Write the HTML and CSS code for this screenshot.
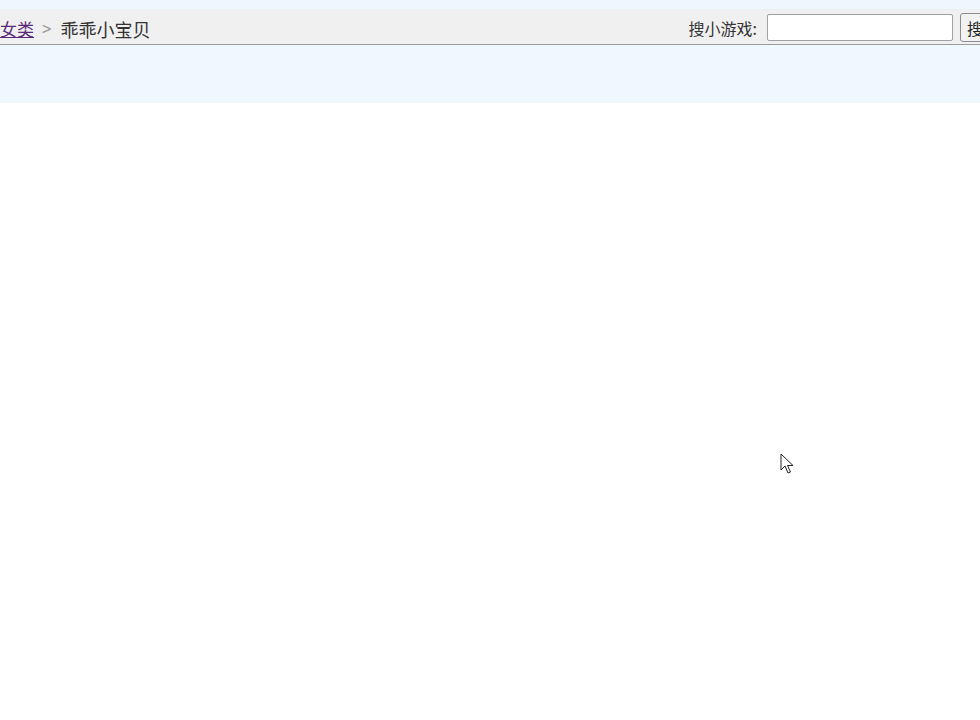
FILE: index.html
```html
<!DOCTYPE html>
<html lang="zh-CN">
  <head>
    <meta charset="UTF-8" />
    <title>乖乖小宝贝</title>
    <link rel="stylesheet" href="styles.css">
  </head>
  <body>
    <div class="page">
      <div class="top-strip"></div>
      <div class="bar">
        <div class="crumbs">
          <a href="#" class="crumb-link">女类</a>
          <span class="sep">&gt;</span>
          <span class="current">乖乖小宝贝</span>
        </div>
        <form class="search">
          <label for="q">搜小游戏:</label>
          <input type="text" id="q" />
          <button type="button">搜索</button>
        </form>
      </div>
      <div class="band"></div>
    </div>
    <svg class="cursor" width="14" height="24" viewBox="0 0 14 24">
      <path d="M1 1 L1 17 L5 13 L8 20 L10.5 19 L7.5 12.5 L13 12.5 Z" fill="#fff" stroke="#222" stroke-width="1" stroke-linejoin="round"/>
    </svg>
  </body>
</html>
```

FILE: styles.css
```css
html,
body {
  margin: 0;
  height: 100%;
  background: #fff;
  overflow: hidden;
}
body {
  font-family: "Noto Sans CJK SC", "DejaVu Sans", sans-serif;
  color: #333;
}
.page {
  width: 1006px;
}
.top-strip {
  height: 9px;
  background: #eef7fc;
}
.bar {
  height: 35px;
  background: #f0f0f0;
  border-bottom: 1px solid #9c9c9c;
  display: flex;
  align-items: center;
  justify-content: space-between;
}
.crumbs {
  display: flex;
  align-items: center;
  font-size: 17px;
  padding-top: 4px;
}
.crumb-link {
  color: #5a2a7a;
  text-decoration: underline;
}
.sep {
  color: #999;
  margin: 0 7px 0 6px;
  font-family: "DejaVu Sans", sans-serif;
  font-size: 16px;
  transform: scaleX(0.8);
}
.current {
  color: #333;
  font-size: 18px;
}
.search {
  display: flex;
  align-items: center;
  margin: 0;
  padding-top: 2px;
}
.search label {
  font-size: 16px;
  color: #333;
  margin-right: 10px;
}
.search input {
  width: 184px;
  height: 25px;
  padding: 0;
  border: 1px solid #a0a0a0;
  border-radius: 2px;
  background: #fff;
  margin: 0 7px 0 0;
}
.search button {
  height: 29px;
  padding: 0 6px;
  font-family: "Noto Sans CJK SC", sans-serif;
  font-size: 16px;
  color: #222;
  background: #f2f2f2;
  border: 1px solid #8c8c8c;
  border-radius: 3px;
}
.band {
  height: 58px;
  background: #eff8ff;
}
.cursor {
  position: absolute;
  left: 780px;
  top: 453px;
}
```
